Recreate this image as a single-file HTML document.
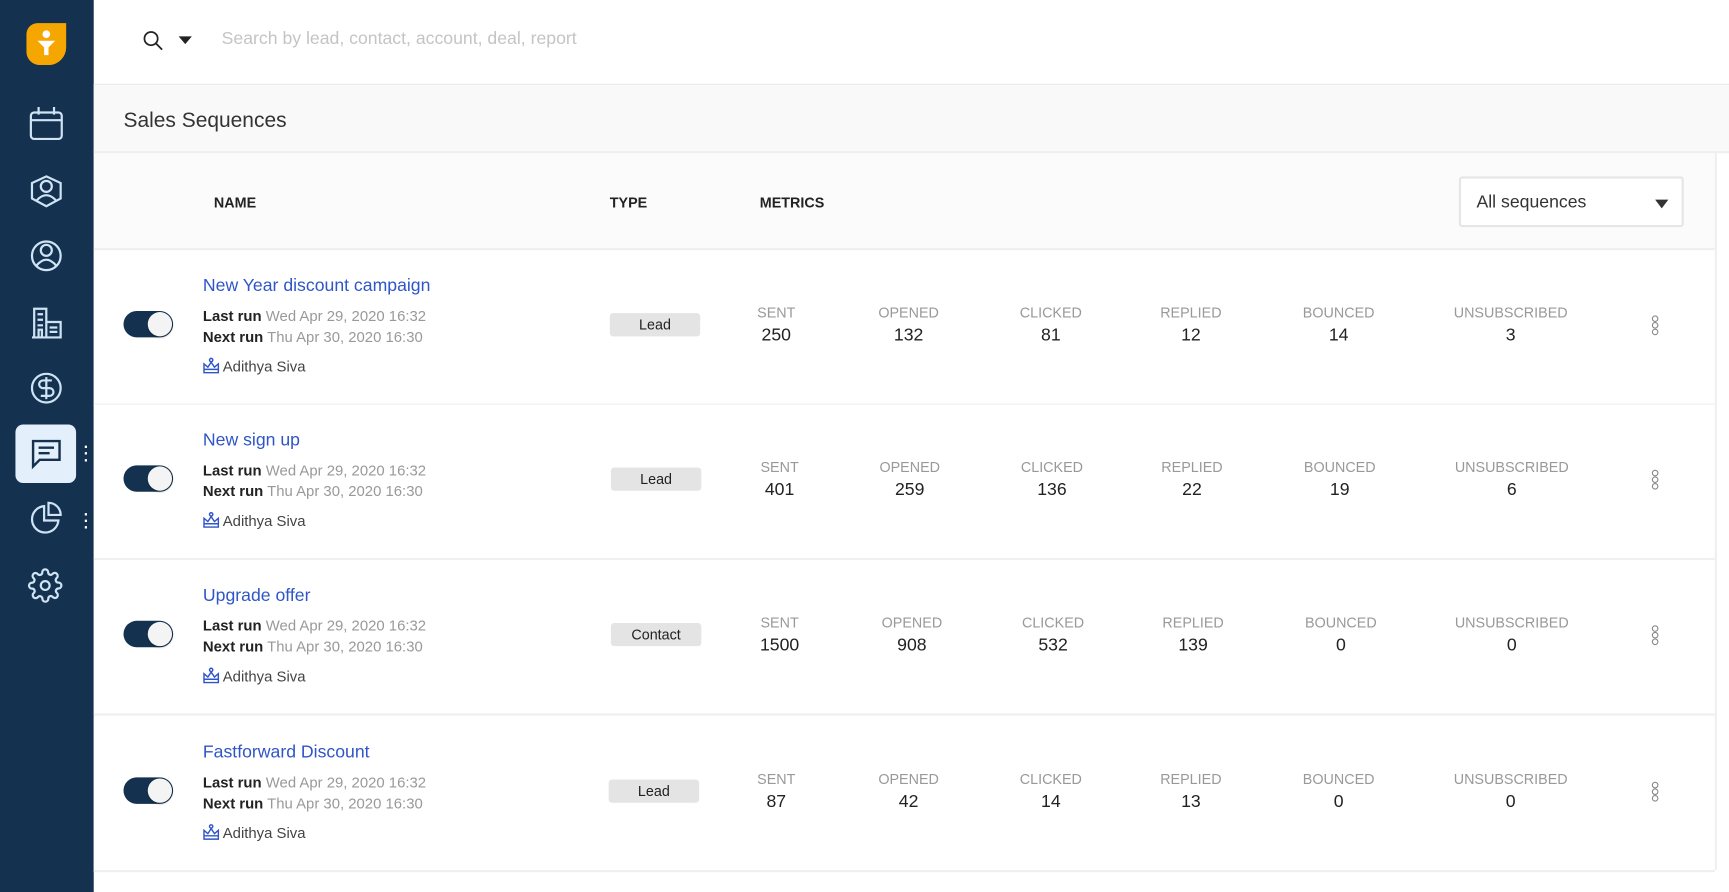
<!DOCTYPE html>
<html><head><meta charset="utf-8"><style>
*{margin:0;padding:0;box-sizing:border-box}
html,body{width:1729px;height:892px;overflow:hidden;background:#fff}
#w{position:absolute;left:0;top:0;width:1568px;height:809px;transform:scale(1.10268);transform-origin:0 0;font-family:"Liberation Sans",sans-serif}
.sb{position:absolute;left:0;top:0;width:85px;height:809px;background:#14324f}
.a{position:absolute;white-space:nowrap}
.hdr{position:absolute;left:85px;top:76px;width:1483px;height:63px;background:#f9f9f9;border-top:1px solid #ececec;border-bottom:2px solid #efefef}
.th{position:absolute;left:85px;top:139px;width:1470px;height:88px;background:#fbfbfb;border-bottom:2px solid #efefef}
.row{position:absolute;left:85px;width:1470px;height:141px;background:#fff;border-bottom:2px solid #efefef}
.tg{position:absolute;left:27px;top:55px;width:45px;height:24px;border-radius:12px;background:#14324f}
.tg:after{content:"";position:absolute;right:1px;top:1px;width:22px;height:22px;border-radius:50%;background:#f4f4f4;box-shadow:0 1px 2px rgba(0,0,0,.3)}
.t{position:absolute;left:99px;top:24px;font-size:16px;color:#2f55c8}
.l{position:absolute;left:99px;font-size:13.5px;color:#999}
.l b{color:#222;font-weight:bold}
.u{position:absolute;left:99px;top:97px;font-size:13.5px;color:#444}
.u svg{vertical-align:-2px;margin-right:3px}
.tp{position:absolute;top:57px;width:82px;height:21px;background:#e4e4e4;border-radius:3px;font-size:13px;color:#222;text-align:center;line-height:21px}
.m{position:absolute;top:49px;width:140px;margin-left:-70px;text-align:center}
.m i{display:block;font-style:normal;font-size:13px;color:#999}
.m b{display:block;font-weight:normal;font-size:16px;color:#222;margin-top:5px}
.d{position:absolute;left:1413px;top:59px;width:6px}
.d span{display:block;width:6px;height:6px;border:1px solid #888;border-radius:50%}
</style></head><body><div id="w">
<div class="sb"></div>
<svg class="a" style="left:22px;top:19px" width="40" height="40" viewBox="0 0 40 40"><path d="M12 2H38V24A16 16 0 0 1 22 40H14A12 12 0 0 1 2 28V12A10 10 0 0 1 12 2Z" fill="#f6a600"/><circle cx="20" cy="12" r="3.5" fill="#fff"/><path d="M12 18H28L22 24V31H18V24Z" fill="#fff"/></svg>
<svg class="a" style="left:22px;top:92px" width="40" height="440" viewBox="0 0 40 440" fill="none" stroke="#cfe3f5" stroke-width="2">
<rect x="6" y="10" width="28" height="24" rx="3"/><path d="M6 17H34M13 5V12M27 5V12"/>
<path d="M20 68L33 74V88L20 95L7 88V74Z"/><circle cx="20" cy="77" r="5"/><path d="M11 90Q20 80 29 90"/>
<circle cx="20" cy="140" r="13"/><circle cx="20" cy="135" r="5"/><path d="M11 149Q20 138 29 149"/>
<path d="M9 214V188H20V214M20 200H33V214H7M12 193H17M12 198H17M12 203H17M23 205H30M23 209H30M13 214V207H16V214"/>
<circle cx="20" cy="260" r="13"/><path d="M25 253H17A3 3 0 0 0 17 260H23A3 3 0 0 1 23 267H15M20 250V270"/>
</svg>
<div class="a" style="left:14px;top:385px;width:55px;height:53px;background:#e3effb;border-radius:7px"></div>
<svg class="a" style="left:27px;top:396px" width="30" height="30" viewBox="0 0 30 30" fill="none" stroke="#14324f" stroke-width="2.2"><path d="M3 4H27V21H9L3 27Z"/><path d="M8 10H22M8 15H18"/></svg>
<svg class="a" style="left:27px;top:454px" width="30" height="32" viewBox="0 0 30 32" fill="none" stroke="#cfe3f5" stroke-width="2"><path d="M13 5A12 12 0 1 0 26 18H13Z"/><path d="M17 2A11 11 0 0 1 28 13H17Z"/></svg>
<svg class="a" style="left:25px;top:515px" width="32" height="32" viewBox="0 0 24 24" fill="none" stroke="#cfe3f5" stroke-width="1.5"><circle cx="12" cy="12" r="3"/><path d="M19.4 15a1.7 1.7 0 0 0 .3 1.8l.1.1a2 2 0 1 1-2.8 2.8l-.1-.1a1.7 1.7 0 0 0-1.8-.3 1.7 1.7 0 0 0-1 1.5V21a2 2 0 1 1-4 0v-.1a1.7 1.7 0 0 0-1.1-1.5 1.7 1.7 0 0 0-1.8.3l-.1.1a2 2 0 1 1-2.8-2.8l.1-.1a1.7 1.7 0 0 0 .3-1.8 1.7 1.7 0 0 0-1.5-1H3a2 2 0 1 1 0-4h.1a1.7 1.7 0 0 0 1.5-1.1 1.7 1.7 0 0 0-.3-1.8l-.1-.1a2 2 0 1 1 2.8-2.8l.1.1a1.7 1.7 0 0 0 1.8.3H9a1.7 1.7 0 0 0 1-1.5V3a2 2 0 1 1 4 0v.1a1.7 1.7 0 0 0 1 1.5 1.7 1.7 0 0 0 1.8-.3l.1-.1a2 2 0 1 1 2.8 2.8l-.1.1a1.7 1.7 0 0 0-.3 1.8V9a1.7 1.7 0 0 0 1.5 1H21a2 2 0 1 1 0 4h-.1a1.7 1.7 0 0 0-1.5 1z"/></svg>
<div class="a" style="left:76px;top:402px;color:#fff;font-size:14px;line-height:6px;font-weight:bold">·<br>·<br>·</div>
<div class="a" style="left:76px;top:463px;color:#fff;font-size:14px;line-height:6px;font-weight:bold">·<br>·<br>·</div>

<svg class="a" style="left:129px;top:27px" width="20" height="20" viewBox="0 0 20 20" fill="none" stroke="#222" stroke-width="1.6"><circle cx="8" cy="8" r="6"/><path d="M12.5 12.5L18 18"/></svg>
<div class="a" style="left:162px;top:33px;border-left:6px solid transparent;border-right:6px solid transparent;border-top:7px solid #222"></div>
<div class="a" style="left:201px;top:27px;font-size:16px;color:#c4c4c4">Search by lead, contact, account, deal, report</div>

<div class="hdr"><div class="a" style="left:27px;top:22px;font-size:19px;color:#333">Sales Sequences</div></div>
<div class="a" style="left:1555px;top:139px;width:2px;height:650px;background:#efefef"></div>
<div class="th">
<div class="a" style="left:109px;top:37px;font-size:13px;font-weight:bold;color:#222">NAME</div>
<div class="a" style="left:468px;top:37px;font-size:13px;font-weight:bold;color:#222">TYPE</div>
<div class="a" style="left:604px;top:37px;font-size:13px;font-weight:bold;color:#222">METRICS</div>
<div class="a" style="left:1238px;top:21px;width:204px;height:46px;border:2px solid #e6e6e6;border-radius:3px;background:#fff;font-size:16px;color:#333;padding:13px 0 0 14px">All sequences<div class="a" style="left:176px;top:19px;border-left:6px solid transparent;border-right:6px solid transparent;border-top:8px solid #333"></div></div>
</div>

<div class="row" style="top:227px">
<div class="tg"></div><div class="t">New Year discount campaign</div>
<div class="l" style="top:52px"><b>Last run</b> Wed Apr 29, 2020 16:32</div>
<div class="l" style="top:71px"><b>Next run</b> Thu Apr 30, 2020 16:30</div>
<div class="u"><svg width="15" height="15" viewBox="0 0 15 15" fill="none" stroke="#2f55c8" stroke-width="1.3"><circle cx="7.5" cy="2.5" r="1.5"/><path d="M1 14V6L4.5 9L7.5 4.5L10.5 9L14 6V14ZM1 11H14"/></svg>Adithya Siva</div>
<div class="tp" style="left:468px">Lead</div>
<div class="m" style="left:619px"><i>SENT</i><b>250</b></div><div class="m" style="left:739px"><i>OPENED</i><b>132</b></div><div class="m" style="left:868px"><i>CLICKED</i><b>81</b></div><div class="m" style="left:995px"><i>REPLIED</i><b>12</b></div><div class="m" style="left:1129px"><i>BOUNCED</i><b>14</b></div><div class="m" style="left:1285px"><i>UNSUBSCRIBED</i><b>3</b></div>
<div class="d"><span></span><span></span><span></span></div>
</div>
<div class="row" style="top:367px">
<div class="tg"></div><div class="t">New sign up</div>
<div class="l" style="top:52px"><b>Last run</b> Wed Apr 29, 2020 16:32</div>
<div class="l" style="top:71px"><b>Next run</b> Thu Apr 30, 2020 16:30</div>
<div class="u"><svg width="15" height="15" viewBox="0 0 15 15" fill="none" stroke="#2f55c8" stroke-width="1.3"><circle cx="7.5" cy="2.5" r="1.5"/><path d="M1 14V6L4.5 9L7.5 4.5L10.5 9L14 6V14ZM1 11H14"/></svg>Adithya Siva</div>
<div class="tp" style="left:469px">Lead</div>
<div class="m" style="left:622px"><i>SENT</i><b>401</b></div><div class="m" style="left:740px"><i>OPENED</i><b>259</b></div><div class="m" style="left:869px"><i>CLICKED</i><b>136</b></div><div class="m" style="left:996px"><i>REPLIED</i><b>22</b></div><div class="m" style="left:1130px"><i>BOUNCED</i><b>19</b></div><div class="m" style="left:1286px"><i>UNSUBSCRIBED</i><b>6</b></div>
<div class="d"><span></span><span></span><span></span></div>
</div>
<div class="row" style="top:508px">
<div class="tg"></div><div class="t">Upgrade offer</div>
<div class="l" style="top:52px"><b>Last run</b> Wed Apr 29, 2020 16:32</div>
<div class="l" style="top:71px"><b>Next run</b> Thu Apr 30, 2020 16:30</div>
<div class="u"><svg width="15" height="15" viewBox="0 0 15 15" fill="none" stroke="#2f55c8" stroke-width="1.3"><circle cx="7.5" cy="2.5" r="1.5"/><path d="M1 14V6L4.5 9L7.5 4.5L10.5 9L14 6V14ZM1 11H14"/></svg>Adithya Siva</div>
<div class="tp" style="left:469px">Contact</div>
<div class="m" style="left:622px"><i>SENT</i><b>1500</b></div><div class="m" style="left:742px"><i>OPENED</i><b>908</b></div><div class="m" style="left:870px"><i>CLICKED</i><b>532</b></div><div class="m" style="left:997px"><i>REPLIED</i><b>139</b></div><div class="m" style="left:1131px"><i>BOUNCED</i><b>0</b></div><div class="m" style="left:1286px"><i>UNSUBSCRIBED</i><b>0</b></div>
<div class="d"><span></span><span></span><span></span></div>
</div>
<div class="row" style="top:650px">
<div class="tg"></div><div class="t">Fastforward Discount</div>
<div class="l" style="top:52px"><b>Last run</b> Wed Apr 29, 2020 16:32</div>
<div class="l" style="top:71px"><b>Next run</b> Thu Apr 30, 2020 16:30</div>
<div class="u"><svg width="15" height="15" viewBox="0 0 15 15" fill="none" stroke="#2f55c8" stroke-width="1.3"><circle cx="7.5" cy="2.5" r="1.5"/><path d="M1 14V6L4.5 9L7.5 4.5L10.5 9L14 6V14ZM1 11H14"/></svg>Adithya Siva</div>
<div class="tp" style="left:467px">Lead</div>
<div class="m" style="left:619px"><i>SENT</i><b>87</b></div><div class="m" style="left:739px"><i>OPENED</i><b>42</b></div><div class="m" style="left:868px"><i>CLICKED</i><b>14</b></div><div class="m" style="left:995px"><i>REPLIED</i><b>13</b></div><div class="m" style="left:1129px"><i>BOUNCED</i><b>0</b></div><div class="m" style="left:1285px"><i>UNSUBSCRIBED</i><b>0</b></div>
<div class="d"><span></span><span></span><span></span></div>
</div>
</div></body></html>
